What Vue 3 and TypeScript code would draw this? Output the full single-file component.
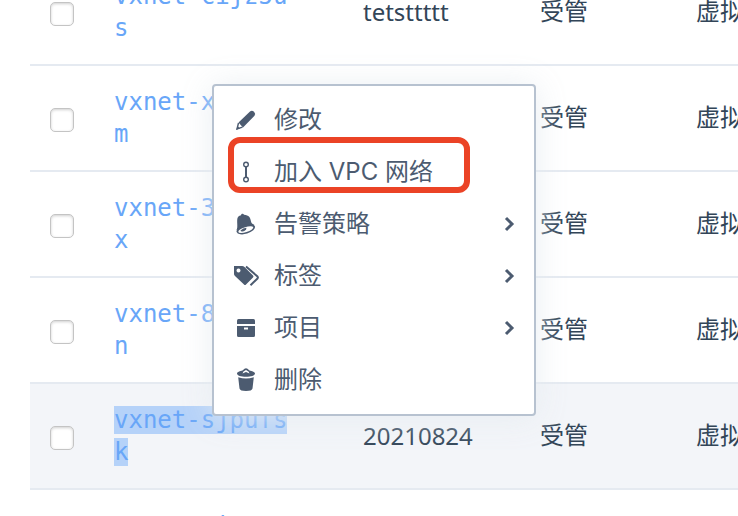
<script setup lang="ts">
interface Network {
  id: string
  name: string
  selected?: boolean
}

interface MenuItem {
  icon: string
  label: string
  nested?: boolean
  marked?: boolean
}

const networks: Network[] = [
  { id: 'vxnet-cijz5us', name: 'tetsttttt' },
  { id: 'vxnet-xk3w7am', name: '' },
  { id: 'vxnet-3p0v9ex', name: '' },
  { id: 'vxnet-8c2r5tn', name: '' },
  { id: 'vxnet-sjpufsk', name: '20210824', selected: true },
  { id: 'vxnet-8i788an', name: '' },
]

const menu: MenuItem[] = [
  { icon: 'pencil', label: '修改' },
  { icon: 'link', label: '加入 VPC 网络', marked: true },
  { icon: 'bell', label: '告警策略', nested: true },
  { icon: 'tags', label: '标签', nested: true },
  { icon: 'box', label: '项目', nested: true },
  { icon: 'trash', label: '删除' },
]
</script>

<template>
  <main class="page">
    <table class="networks">
      <tbody>
        <tr v-for="net in networks" :key="net.id" :class="{ selected: net.selected }">
          <td class="check"><input type="checkbox" :aria-label="net.id" /></td>
          <td class="id"><a href="#"><span>{{ net.id }}</span></a></td>
          <td class="name">{{ net.name }}</td>
          <td class="state">受管</td>
          <td class="kind">虚拟</td>
        </tr>
      </tbody>
    </table>

    <div class="menu" role="menu">
      <button
        v-for="item in menu"
        :key="item.label"
        type="button"
        role="menuitem"
        class="item"
        :class="{ marked: item.marked }"
      >
        <svg class="icon" viewBox="0 0 28 28" aria-hidden="true">
          <g v-if="item.icon === 'pencil'">
            <path d="M6.500 16.500 18 5.500Q20 3.800 22 5.700T22.500 9.800L11 21.500Z" />
            <path d="M6.500 17 5 23 10.500 21.200" class="line" />
            <path d="M4.300 23.800 5.500 20 8 22.500Z" />
          </g>
          <g v-else-if="item.icon === 'link'" class="line">
            <circle cx="14" cy="6.500" r="2.300" /><circle cx="14" cy="21.500" r="2.300" />
            <path d="M14 9V19" class="stem" />
          </g>
          <g v-else-if="item.icon === 'bell'">
            <path d="M4.500 20C6.500 17 4 10 6 7 7 5.500 8 5.500 9 5.200 9.300 3.500 11.500 3.500 12 4.800 17 5 18.500 8 19 11.500 19.500 14 21 14 22.500 15Z" />
            <ellipse cx="13.800" cy="19.200" rx="9.600" ry="4.600" transform="rotate(-17 13.800 19.200)" />
            <ellipse cx="13.800" cy="19.600" rx="7.800" ry="2.500" transform="rotate(-17 13.800 19.600)" class="hole" />
            <path d="M8.500 20.500C9 22.500 14.500 21.500 14.500 17.800Q11 18 8.500 20.500Z" />
          </g>
          <g v-else-if="item.icon === 'tags'">
            <path fill-rule="evenodd" d="M2 4H10Q11.500 4 12.500 5L21 13.500Q22 14.500 21 15.500L14 22.500Q13 23.500 12 22.500L3 14Q2 13 2 12ZM6.500 6.500A2 2 0 1 0 6.510 6.500Z" />
            <path d="M14 4.500 25.500 14.500Q26.300 15.500 25.500 16.500L18.500 23.300" class="line tag-edge" />
          </g>
          <g v-else-if="item.icon === 'box'">
            <path d="M5 6.500Q5 5 6.500 5H21.500Q23 5 23 6.500V10H5Z" />
            <path fill-rule="evenodd" d="M5 12H23V21.500Q23 23 21.500 23H6.500Q5 23 5 21.500ZM12 13.500V15.500H16V13.500Z" />
          </g>
          <g v-else>
            <path fill-rule="evenodd" d="M5 7.500C5 6 8 5 10.500 4.500L12.500 2.800Q14 1.800 15.500 2.800L17.500 4.500C20 5 23 6 23 7.500 23 9.500 19 10.800 14 10.800S5 9.500 5 7.500ZM10.500 7.500 14 6 17.500 7.500 16.500 5.500 14 4 11.500 5.500Z" />
            <path d="M6.200 11.200Q14 14 21.800 11.200L20.500 22.500Q20 25 14 25T7.500 22.500Z" />
          </g>
        </svg>
        <span class="label">{{ item.label }}</span>
        <svg v-if="item.nested" class="arrow" viewBox="0 0 12 16" aria-hidden="true">
          <path d="M3 2 9 8 3 14" />
        </svg>
      </button>
    </div>
  </main>
</template>

<style>
body {
  margin: 0;
  background: #fff;
  overflow: hidden;
}
</style>

<style scoped>
.page {
  position: relative;
  height: 100vh;
  overflow: hidden;
  padding-left: 30px;
  font-family: Inter, "Noto Sans CJK SC", sans-serif;
  font-size: 24px;
  line-height: 32px;
  color: #324558;
}

.networks {
  width: 100%;
  margin-top: -40px;
  border-collapse: separate;
  border-spacing: 0;
  table-layout: fixed;
}

td {
  height: 64px;
  padding: 20px 0;
  border-bottom: 2px solid #e5eaf1;
  white-space: nowrap;
}

.selected td {
  background: #f3f5f9;
}

.check {
  width: 84px;
}

.check input {
  appearance: none;
  display: block;
  box-sizing: border-box;
  width: 24px;
  height: 24px;
  margin: 4px 0 0 20px;
  border: 1px solid #c4c4c4;
  border-radius: 5px;
  background: #fff;
  box-shadow: inset 0 1px 3px #00000030;
}

.id {
  width: 249px;
}

.id a {
  display: block;
  width: 177px;
  color: #68a6f8;
  font-family: "DejaVu Sans Mono", monospace;
  text-decoration: none;
  white-space: normal;
  word-break: break-all;
}

.selected a span {
  background: #b5d2f9;
}

.name {
  width: 177px;
  font-family: "Noto Sans", sans-serif;
}

.state {
  width: 156px;
}

.menu {
  position: absolute;
  top: 84px;
  left: 212px;
  box-sizing: border-box;
  width: 324px;
  padding: 8px 14px;
  border: 2px solid #b7c2d0;
  border-radius: 4px;
  background: #fff;
  box-shadow: 0 2px 32px #e6ecf0e0;
}

.item {
  position: relative;
  display: flex;
  align-items: center;
  width: 100%;
  height: 52px;
  padding: 0 5px 0 4px;
  border: 0;
  background: none;
  color: #4c5b70;
  font: inherit;
  text-align: left;
}

.marked::after {
  content: "";
  position: absolute;
  top: -9px;
  left: 0;
  box-sizing: border-box;
  width: 242px;
  height: 56px;
  border: 6px solid #eb4326;
  border-radius: 12px;
}

.icon {
  width: 28px;
  height: 28px;
  margin-right: 14px;
  fill: #4c5b70;
}

.line {
  fill: none;
  stroke: #4c5b70;
  stroke-width: 1.4;
}

.stem {
  stroke-width: 2;
}

.tag-edge {
  stroke-width: 2;
}

.hole {
  fill: #fff;
}

.label {
  flex: 1;
}

.arrow {
  width: 12px;
  height: 16px;
  fill: none;
  stroke: #4c5b70;
  stroke-width: 3;
}
</style>
